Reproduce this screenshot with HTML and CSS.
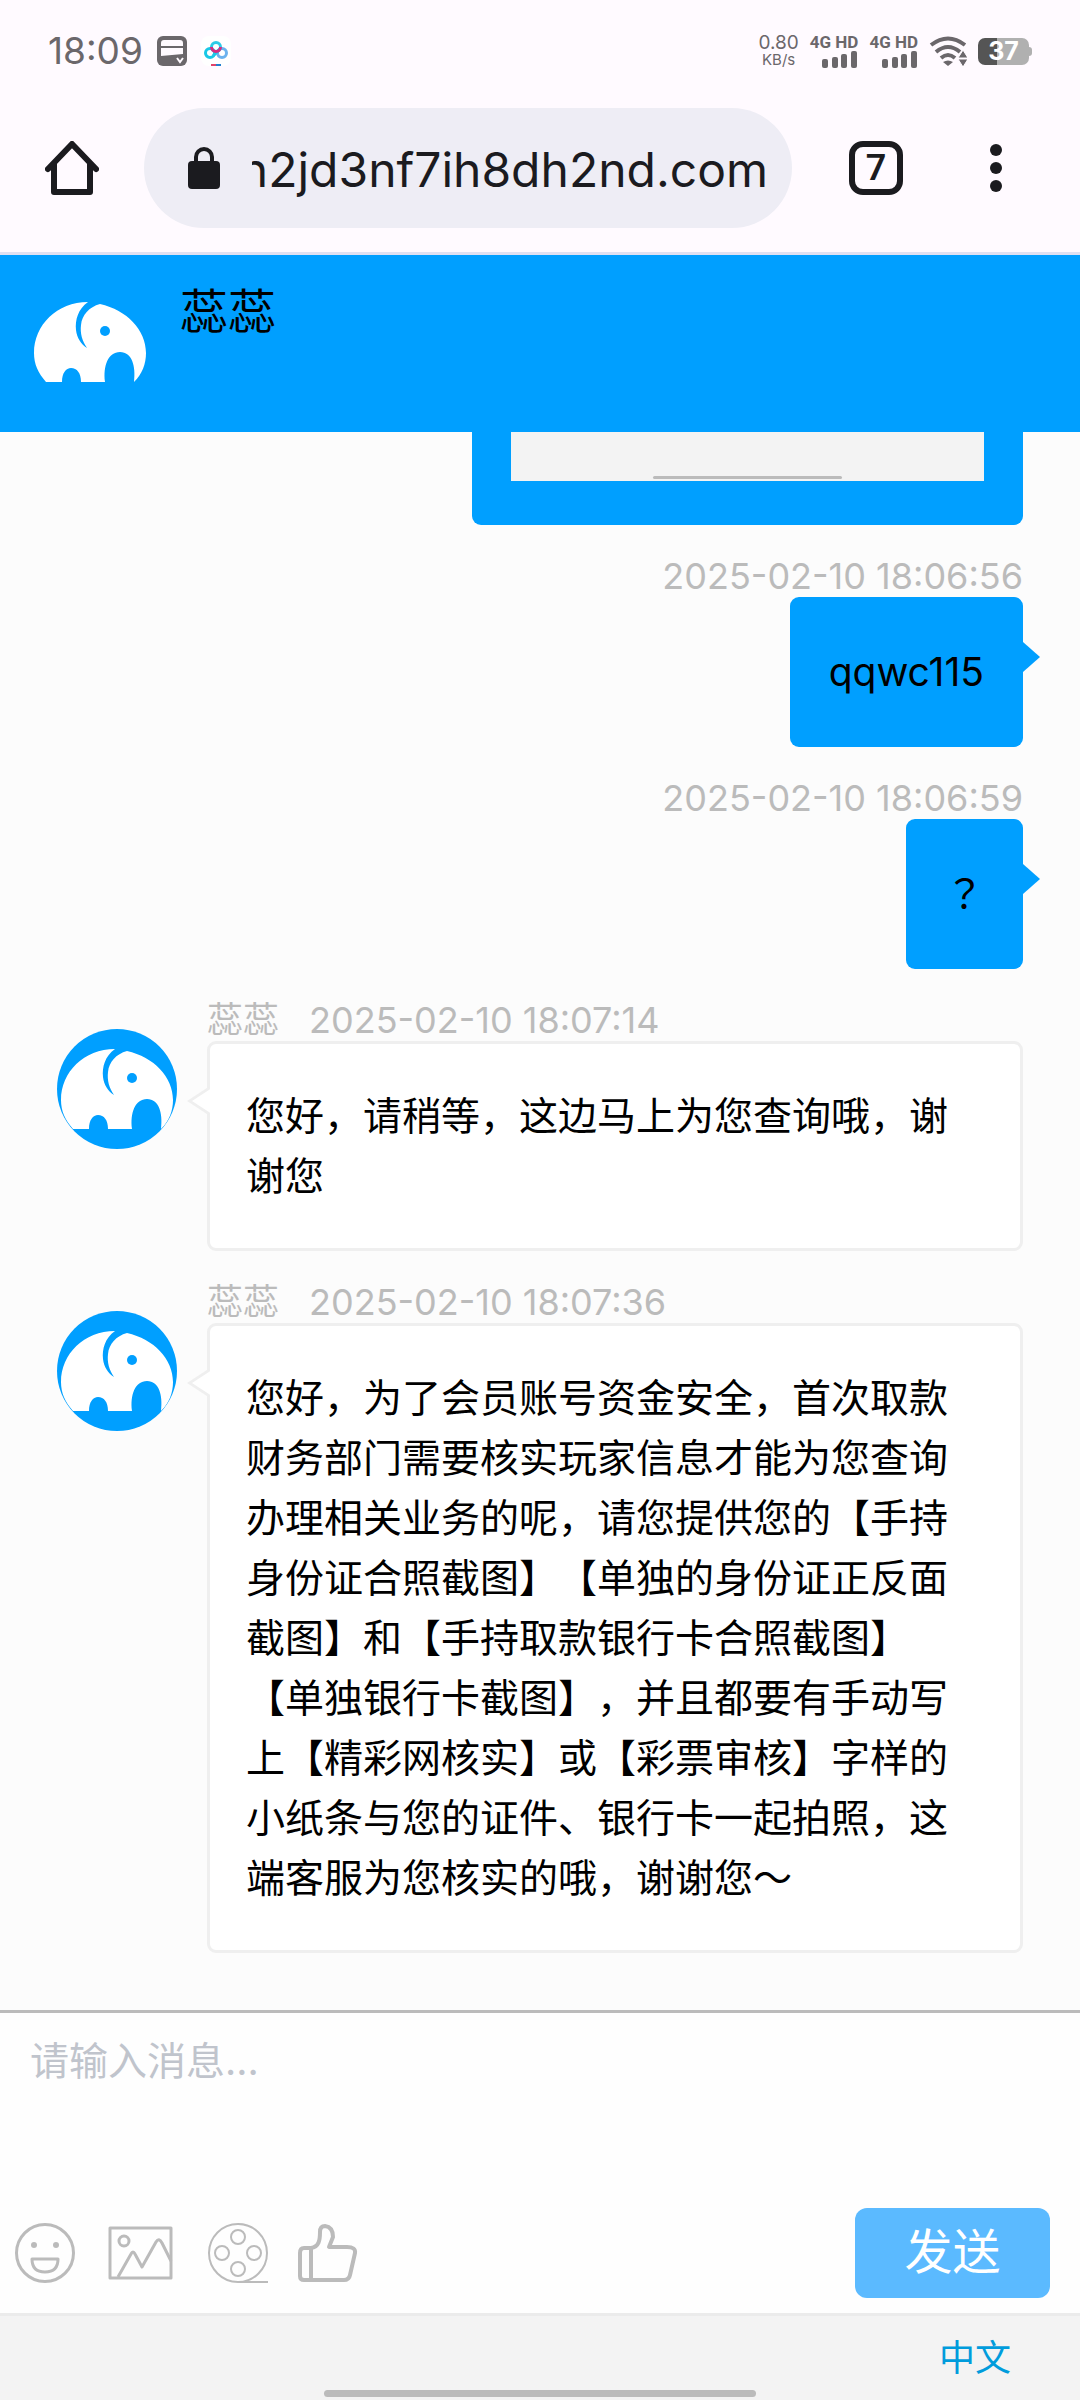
FILE: index.html
```html
<!DOCTYPE html>
<html lang="zh-CN">
<head>
<meta charset="utf-8">
<meta name="viewport" content="width=device-width, initial-scale=1">
<title>在线客服</title>
<link rel="stylesheet" href="styles.css">
</head>
<body>
<svg class="defs" aria-hidden="true">
  <symbol id="elephant" viewBox="0 0 120 120">
    <path fill="#fff" d="M16 100C8 91 4 82 4 71C4 43 27 20 58 20C48 27 45 38 46 48C47 56 51 62 57 66C52 59 50 51 51 43C52 33 59 25 70 22C97 28 116 48 116 71C116 82 112 92 104 100C106 84 102 70 90 70C78 70 73 84 75 100H51C51 91 47 86 41 86C36 86 32 91 32 100Z"/>
    <circle cx="75" cy="49" r="5" fill="#009fff"/>
  </symbol>
  <symbol id="signal" viewBox="0 0 36 17">
    <g fill="#6b676b"><rect x="0" y="8" width="6" height="9" rx="2"/><rect x="10" y="6" width="6" height="11" rx="2"/><rect x="19" y="3" width="6" height="14" rx="2"/><rect x="29" y="0" width="6" height="17" rx="2"/></g>
  </symbol>
</svg>

<div class="screen">
  <div class="status">
    <div class="status-left">
      <time class="clock">18:09</time>
      <svg class="note" viewBox="0 0 30 30" aria-hidden="true">
        <rect width="30" height="30" rx="6" fill="#6b676b"/>
        <path fill="#fffaff" d="M4 10V7q0-3 3-3h16q3 0 3 3v3zM4 12h22v6L4 20z"/>
        <path fill="none" stroke="#fffaff" stroke-width="2" d="M20 22l3 4l3-4"/>
      </svg>
      <svg class="cloud" viewBox="0 0 30 30" aria-hidden="true">
        <rect width="30" height="30" rx="8" fill="#fff"/>
        <g fill="none" stroke-width="3">
          <circle cx="9" cy="17" r="4.500" stroke="#19c8e6"/>
          <circle cx="21" cy="17" r="4.500" stroke="#6bb2ee"/>
          <circle cx="15" cy="11" r="4.500" stroke="#2ccbe8"/>
          <path d="M12 20l7-7" stroke="#19c8e6"/>
          <path d="M10.500 11a4.500 4.500 0 0 0 9 0" stroke="#d92b80"/>
        </g>
        <path stroke="#e0446b" stroke-width="2" d="M10 29h5"/><path stroke="#2380cf" stroke-width="2" d="M15 29h5"/>
      </svg>
    </div>
    <div class="status-right">
      <div class="speed"><span class="rate">0.80</span><span class="unit">KB/s</span></div>
      <div class="sim"><span>4G HD</span><svg class="bars"><use href="#signal"/></svg></div>
      <div class="sim"><span>4G HD</span><svg class="bars"><use href="#signal"/></svg></div>
      <svg class="wifi" viewBox="0 0 38 30" aria-hidden="true">
        <g fill="none" stroke="#6b676b" stroke-width="4">
          <path d="M2 9Q19-4 36 9"/><path d="M7 16Q19 6 31 16"/><path d="M12 22Q19 16 26 22"/>
        </g>
        <path fill="#6b676b" d="M14 26q5-3 10 0l-5 4z"/>
        <path fill="#6b676b" stroke="#fffaff" d="M34 14l5 8h-10zM34 31l-5-8h10z"/>
      </svg>
      <div class="battery">37</div>
    </div>
  </div>

  <nav class="browser">
    <button class="nav-btn" aria-label="主页">
      <svg viewBox="0 0 54 54" class="nav-icon" fill="none" stroke="#1b1b1f" stroke-width="6" stroke-linecap="round" stroke-linejoin="round"><path d="M3 28L27 3L51 28M9 23V51H45V23"/></svg>
    </button>
    <div class="address">
      <svg class="lock" viewBox="0 0 32 42" aria-hidden="true"><rect y="14" width="32" height="28" rx="4" fill="#1b1b1f"/><path d="M8 16V10a8 8 0 0 1 16 0v6" fill="none" stroke="#1b1b1f" stroke-width="4"/></svg>
      <input class="url" dir="rtl" type="text" readonly aria-label="网址" value="n2jd3nf7ih8dh2nd.com">
    </div>
    <button class="nav-btn" aria-label="标签页"><span class="tabs">7</span></button>
    <button class="nav-btn" aria-label="菜单">
      <svg viewBox="0 0 54 54" class="nav-icon" fill="#1b1b1f"><circle cx="27" cy="9" r="6"/><circle cx="27" cy="27" r="6"/><circle cx="27" cy="45" r="6"/></svg>
    </button>
  </nav>

  <header class="agent">
    <svg class="avatar"><use href="#elephant"/></svg>
    <h1 class="agent-name">蕊蕊</h1>
  </header>

  <main class="chat">
    <article class="msg mine">
      <div class="bubble shot"><div class="shot-image"><div class="shot-bar"></div></div></div>
    </article>
    <article class="msg mine">
      <div class="meta"><time>2025-02-10 18:06:56</time></div>
      <p class="bubble">qqwc115</p>
    </article>
    <article class="msg mine">
      <div class="meta"><time>2025-02-10 18:06:59</time></div>
      <p class="bubble">？</p>
    </article>
    <article class="msg theirs">
      <svg class="avatar"><use href="#elephant"/></svg>
      <div class="body">
        <div class="meta"><span>蕊蕊</span><time>2025-02-10 18:07:14</time></div>
        <p class="bubble">您好，请稍等，这边马上为您查询哦，谢谢您</p>
      </div>
    </article>
    <article class="msg theirs">
      <svg class="avatar"><use href="#elephant"/></svg>
      <div class="body">
        <div class="meta"><span>蕊蕊</span><time>2025-02-10 18:07:36</time></div>
        <p class="bubble">您好，为了会员账号资金安全，首次取款财务部门需要核实玩家信息才能为您查询办理相关业务的呢，请您提供您的【手持身份证合照截图】【单独的身份证正反面截图】和【手持取款银行卡合照截图】【单独银行卡截图】，并且都要有手动写上【精彩网核实】或【彩票审核】字样的小纸条与您的证件、银行卡一起拍照，这端客服为您核实的哦，谢谢您～</p>
      </div>
    </article>
  </main>

  <form class="composer">
    <textarea class="draft" aria-label="消息" placeholder="请输入消息..."></textarea>
    <div class="tools">
      <button type="button" class="tool" aria-label="表情">
        <svg viewBox="0 0 66 66" fill="none" stroke="#bbb" stroke-width="3"><circle cx="33" cy="33" r="28.500"/><circle cx="22" cy="25" r="3" fill="#bbb" stroke="none"/><circle cx="44" cy="25" r="3" fill="#bbb" stroke="none"/><path stroke-linejoin="round" d="M20 39H46Q46 52 33 52Q20 52 20 39Z"/></svg>
      </button>
      <button type="button" class="tool" aria-label="图片">
        <svg viewBox="0 0 66 66" fill="none" stroke="#bbb" stroke-width="3" stroke-linejoin="round"><rect x="2" y="8" width="61" height="50"/><circle cx="16" cy="21" r="5"/><path d="M10 57L23 34Q25 30 27 34L34 47L48 22Q51 17 54 23L63 41"/></svg>
      </button>
      <button type="button" class="tool" aria-label="视频">
        <svg viewBox="0 0 66 66" fill="none" stroke="#bbb" stroke-width="2"><circle cx="34" cy="33" r="29"/><circle cx="34" cy="17" r="7"/><circle cx="18" cy="33" r="7"/><circle cx="50" cy="33" r="7"/><circle cx="34" cy="49" r="7"/><path d="M34 62H64"/></svg>
      </button>
      <button type="button" class="tool" aria-label="评价">
        <svg viewBox="0 0 66 66" fill="none" stroke="#bbb" stroke-width="4" stroke-linejoin="round"><path d="M2 28H9C17 27 18 20 18 12Q18 6 23 6Q31 7 31 17L27 27H45Q54 27 53 33L48 55Q47 60 42 60H2Q-2 60-2 56V33Q-2 28 2 28Z" transform="translate(2 0)"/><path d="M11 28V60"/></svg>
      </button>
      <button type="submit" class="send">发送</button>
    </div>
  </form>

  <footer class="foot">
    <a class="lang" href="#">中文</a>
    <div class="gesture"></div>
  </footer>
</div>
</body>
</html>
```
FILE: styles.css
```css
* { box-sizing: border-box; }
body {
  margin: 0;
  font-family: Inter, "Noto Sans CJK SC", sans-serif;
  font-size: 39px;
  line-height: 60px;
  color: #000;
  text-spacing-trim: space-all;
}
h1, p { margin: 0; font-weight: 400; }
button { border: 0; padding: 0; background: none; font-family: inherit; cursor: pointer; }
.defs { position: absolute; width: 0; height: 0; }
.screen { display: flex; flex-direction: column; min-height: 100vh; background: #fcfcfc; }

/* status bar */
.status {
  display: flex; justify-content: space-between; align-items: center;
  height: 102px; padding: 0 51px 0 48px; background: #fffaff; color: #6b676b;
}
.status-left { display: flex; align-items: center; gap: 14px; }
.clock { font-size: 37px; }
.note, .cloud { width: 30px; height: 30px; }
.status-right { display: flex; align-items: center; gap: 11px; }
.speed { display: flex; flex-direction: column; align-items: center; line-height: 17px; }
.rate { font-size: 19px; }
.unit { font-size: 15px; }
.sim { display: flex; flex-direction: column; align-items: flex-end; }
.sim span { font: 700 17px/17px Roboto, sans-serif; }
.bars { width: 36px; height: 17px; }
.wifi { width: 38px; height: 30px; }
.battery {
  position: relative; width: 51px; height: 27px; border-radius: 7px;
  background: linear-gradient(90deg, #555 37%, #b0b0b0 37%);
  color: #fff; font-weight: 700; font-size: 25px; line-height: 27px; text-align: center;
}
.battery::after {
  content: ""; position: absolute; left: 100%; top: 9px; width: 3px; height: 9px;
  border-radius: 0 3px 3px 0; background: #b0b0b0;
}

/* browser toolbar */
.browser {
  display: flex; align-items: center; height: 153px; padding: 0 24px 18px 0;
  border-bottom: 3px solid #dfe0f2; background: #fffaff;
}
.nav-btn { flex: none; width: 120px; display: grid; place-items: center; }
.nav-btn:first-child { width: 144px; }
.nav-icon { width: 54px; height: 54px; display: block; }
.address {
  flex: 1; min-width: 0; display: flex; align-items: center; gap: 32px;
  height: 120px; margin: 0 24px 0 0; padding: 0 24px 0 44px;
  border-radius: 60px; background: #eeedf5;
}
.lock { flex: none; width: 32px; height: 42px; }
.url {
  flex: 1; min-width: 0; border: 0; padding: 3px 0 0; background: none; outline: 0;
  font: 400 48px/60px Inter, sans-serif; color: #1b1b1f;
}
.tabs {
  width: 54px; height: 54px; border: 6px solid #1b1b1f; border-radius: 14px;
  font: 600 36px/42px Roboto, sans-serif; color: #1b1b1f;
}

/* conversation header */
.agent { display: flex; gap: 30px; padding: 27px 30px 30px; background: #009fff; }
.avatar { flex: none; display: block; width: 120px; height: 120px; }
.agent-name { font-size: 48px; line-height: 60px; }

/* messages */
.chat {
  flex: 1; display: flex; flex-direction: column; gap: 30px;
  padding: 0 57px 57px;
}
.meta { display: flex; gap: 30px; font-size: 36px; line-height: 42px; color: #bbb; }
.msg.mine { display: flex; flex-direction: column; align-items: flex-end; }
.msg.theirs { display: flex; align-items: flex-start; gap: 30px; }
.theirs .avatar { margin-top: 30px; border-radius: 50%; background: #009fff; }
.body { flex: 1; min-width: 0; }
.bubble { position: relative; padding: 45px 39px; border-radius: 9px; }
.mine .bubble { background: #009fff; font-family: Inter, "Noto Sans CJK TC", sans-serif; }
.theirs .bubble { padding: 42px 36px; border: 3px solid #efefef; background: #fff; }
.mine p.bubble::after {
  content: ""; position: absolute; left: 100%; top: 45px;
  border: 15px solid transparent; border-width: 15px 0 15px 17px; border-left-color: #009fff;
}
.theirs .bubble::before, .theirs .bubble::after {
  content: ""; position: absolute; right: 100%; top: 42px;
  border: 15px solid transparent; border-width: 15px 23px 15px 0; border-right-color: #efefef;
}
.theirs .bubble::after { margin-right: -5px; border-right-color: #fff; }
.mine .shot { width: 57%; padding: 0 39px 44px; border-radius: 0 0 9px 9px; }
.shot-image {
  display: flex; justify-content: center; align-items: flex-end;
  height: 49px; padding-bottom: 2px; background: #f3f3f3;
}
.shot-bar { width: 40%; height: 3px; border-radius: 2px; background: #bbb; }

/* composer */
.composer { display: flex; flex-direction: column; border-top: 3px solid #bbb; background: #fefefe; }
.draft {
  height: 195px; padding: 18px 30px; border: 0; outline: 0; resize: none; background: none;
  font: inherit; color: #000;
}
.draft::placeholder { color: #c0c4cc; opacity: 1; }
.tools { display: flex; align-items: center; gap: 30px; padding: 0 30px 15px 12px; }
.tool, .tool svg { display: block; width: 66px; height: 66px; overflow: visible; }
.send {
  width: 195px; height: 90px; margin-left: auto; padding-bottom: 2px; border-radius: 12px;
  background: #5bbaff; color: #fff; font-size: 48px; line-height: 60px;
}

/* footer */
.foot {
  display: flex; flex-direction: column; align-items: center; gap: 11px;
  border-top: 3px solid #ebebeb; padding: 21px 0 3px; background: #f3f3f3;
}
.lang { align-self: flex-end; margin-right: 69px; font-size: 36px; line-height: 42px; color: #009cdc; text-decoration: none; }
.gesture { width: 40%; height: 7px; border-radius: 4px; background: #bbb; }
```
